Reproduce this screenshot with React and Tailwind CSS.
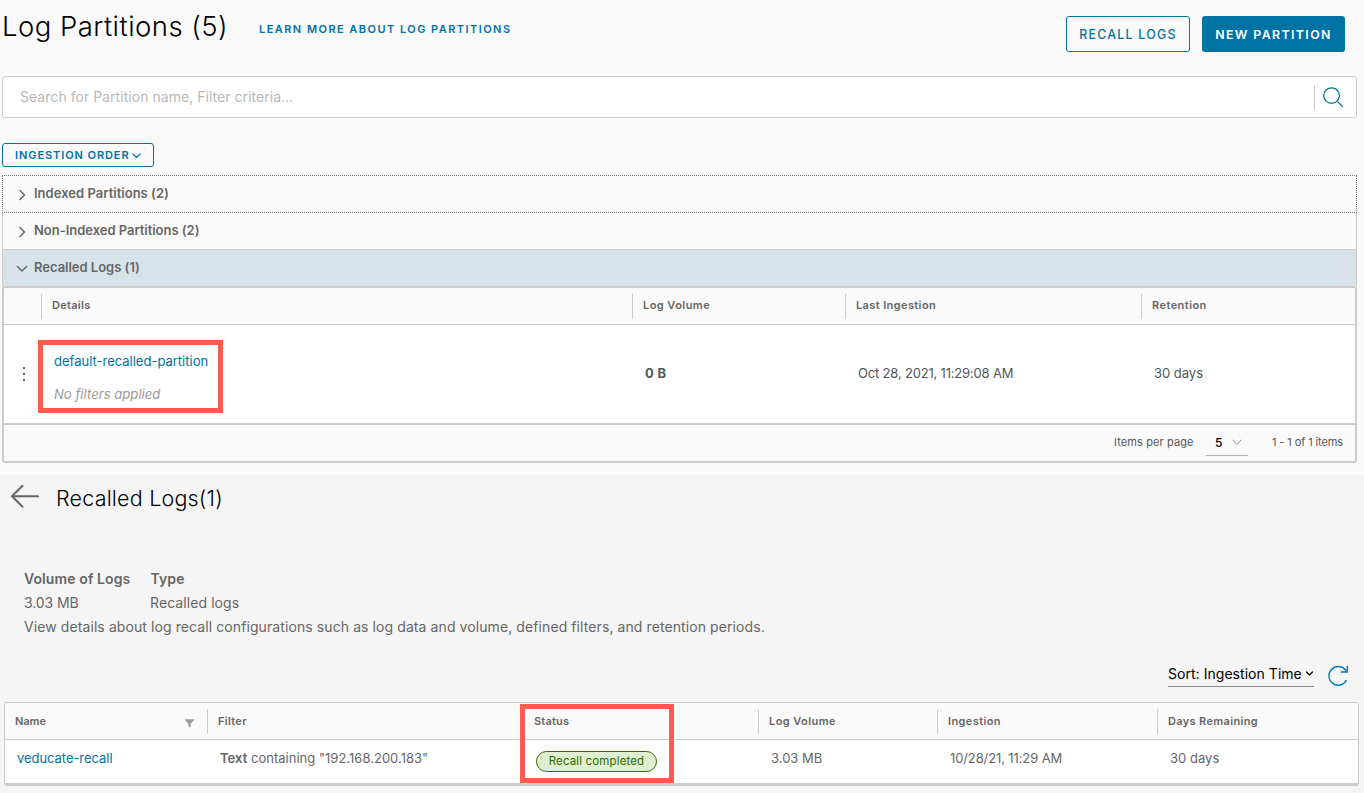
const Chevron = ({ className, d = "M1 1l3.5 3.5L8 1", box = "0 0 9 6" }) => (
  <svg viewBox={box} className={className} fill="none" stroke="currentColor" strokeLinecap="round" strokeLinejoin="round">
    <path d={d} />
  </svg>
);

const HeadCell = ({ className = "", first = false, children }) => (
  <div className={"flex h-full items-center " + className}>
    <div className={"flex h-[25px] w-full items-center border-l " + (first ? "border-transparent" : "border-[#ccc]")}>
      <div className="flex h-[24px] w-full items-center self-start pl-[10px] text-[11px] font-semibold">{children}</div>
    </div>
  </div>
);

function AccordionRow({ label, open, className }) {
  return (
    <div className={"flex items-center text-[13px] font-semibold text-[#666] " + className}>
      <div className="flex w-[15px] justify-center pt-[2px]">
        {open ? (
          <Chevron className="h-[8px] w-[12px] stroke-[1.5]" box="0 0 12 8" d="M1.5 1.5L6 6l4.5-4.5" />
        ) : (
          <Chevron className="h-[12px] w-[8px] stroke-[1.5]" box="0 0 8 12" d="M2 1.5L6.5 6 2 10.5" />
        )}
      </div>
      <span className="pl-[5px] pt-px">{label}</span>
    </div>
  );
}

function PartitionsPanel() {
  return (
    <section className="h-[475px] bg-[#fafafa] pl-[2px] pr-[7px]">
      <header className="flex h-[76px] items-start">
        <h1 className="w-[257px] pt-[10px] text-[27.5px] font-light leading-[32px] tracking-[0.45px] text-black">Log Partitions (5)</h1>
        <a className="pt-[20px] text-[11px] font-semibold leading-[18px] tracking-[1.45px] text-[#0072a3]">LEARN MORE ABOUT LOG PARTITIONS</a>
        <div className="ml-auto mr-[12px] flex gap-3 pt-4">
          <button className="h-9 w-[124px] rounded-[3px] border border-[#0072a3] pt-[2px] text-[12.4px] font-medium tracking-[1.25px] text-[#0072a3]">RECALL LOGS</button>
          <button className="h-9 w-[143px] rounded-[3px] bg-[#0072a3] pt-[2px] text-[12.4px] font-semibold tracking-[1.36px] text-white">NEW PARTITION</button>
        </div>
      </header>

      <div className="flex h-[42px] items-center rounded-[3px] border border-[#ccc] bg-white">
        <span className="grow pb-[2px] pl-[17px] text-[14px] tracking-[0.04px] text-[#b8b8b8]">Search for Partition name, Filter criteria...</span>
        <div className="flex h-[25px] w-[42px] items-center border-l border-[#ccc] pl-[7px]">
          <svg viewBox="0 0 22 22" className="h-[22px] w-[22px] pt-px" fill="none" stroke="#0072a3" strokeWidth="1.3" strokeLinecap="round">
            <circle cx="9.5" cy="9" r="8.2" />
            <path d="M16 15.6l5 5" />
          </svg>
        </div>
      </div>

      <button className="mt-[25px] flex h-6 w-[152px] items-center rounded-[3px] border border-[#0072a3] pl-[12px] text-[11px] font-semibold tracking-[0.92px] text-[#0072a3]">
        INGESTION ORDER
        <Chevron className="ml-[2px] mt-[2px] h-[6px] w-[9px] stroke-[1.2]" />
      </button>

      <div className="mt-2">
        <AccordionRow label="Indexed Partitions (2)" className="h-[38px] border border-dotted border-[#777] pb-px pl-[11px] tracking-[0.02px]" />
        <AccordionRow label="Non-Indexed Partitions (2)" className="h-[36px] border-x border-[#ccc] pb-px pl-[11px] tracking-[-0.03px]" />
        <AccordionRow open label="Recalled Logs (1)" className="h-[37px] border border-b-0 border-[#ccc] bg-[#d8e3e9] pb-px pl-[11px] tracking-[-0.02px]" />
      </div>

      <div className="relative rounded-[3px] border-2 border-[#ccc] text-[13px] text-[#565656]">
        <div className="flex h-[37px] border-b border-[#ccc] text-[#666]">
          <div className="w-[37px]" />
          <HeadCell className="w-[591px] tracking-[0.29px]">Details</HeadCell>
          <HeadCell className="w-[213px] tracking-[0.45px]">Log Volume</HeadCell>
          <HeadCell className="w-[296px] tracking-[0.39px]">Last Ingestion</HeadCell>
          <HeadCell className="grow tracking-[0.45px]">Retention</HeadCell>
        </div>
        <div className="flex h-[98px] items-center bg-white">
          <div className="flex w-[37px] flex-col items-center gap-[4px] pl-[3px]">
            <i className="size-[2px] bg-[#666]" />
            <i className="size-[2px] bg-[#666]" />
            <i className="size-[2px] bg-[#666]" />
          </div>
          <div className="w-[591px] pl-[13px] pt-[6px]">
            <div className="h-[32px] leading-[20px] text-[#0072a3]">
              <span className="block pt-[4px]">default-recalled-partition</span>
            </div>
            <div className="h-[28px] pt-[5px] italic leading-[20px] tracking-[0.06px] text-[#999]">No filters applied</div>
          </div>
          <div className="w-[213px] pl-[13px] font-bold tracking-[0.33px]">0 B</div>
          <div className="w-[296px] pl-[13px] tracking-[-0.18px]">Oct 28, 2021, 11:29:08 AM</div>
          <div className="pl-[13px] tracking-[-0.02px]">30 days</div>
        </div>
        <div className="flex h-[38px] items-start border-t-2 border-[#ccc] text-[11px]">
          <span className="ml-auto w-[92px] pt-[8px] leading-[18px] tracking-[0.1px]">Items per page</span>
          <div className="flex h-[31px] w-[42px] items-center border-b border-[#b3b3b3] pl-[9px] pt-[6px] text-[12px] font-medium text-black">
            <span className="w-[17px]">5</span>
            <Chevron className="mb-[2px] h-[7px] w-[10px] text-[#999]" box="0 0 10 7" d="M1 1l4 4.5L9 1" />
          </div>
          <span className="w-[107px] whitespace-nowrap pl-[24px] pt-[8px] leading-[18px] tracking-[-0.1px]">1 - 1 of 1 items</span>
        </div>
        <div className="absolute left-[34px] top-[52px] h-[73px] w-[185px] border-[5px] border-[#fa5c4d]" />
      </div>
    </section>
  );
}

function RecalledLogsPanel() {
  return (
    <section className="h-[318px] bg-[#f5f5f5] text-[#666]">
      <div className="flex h-[92px] items-start pl-[10px] pt-[9px]">
        <svg viewBox="0 0 30 25" className="h-[25px] w-[30px]" fill="none" stroke="#666" strokeWidth="2" strokeLinecap="round" strokeLinejoin="round">
          <path d="M28 12.3H2M12.5 1.8L2 12.3l10.5 10.5" />
        </svg>
        <h2 className="pl-[16px] text-[21.5px] font-light leading-[29px] tracking-[0.2px] text-black">Recalled Logs(1)</h2>
      </div>

      <div className="flex h-[48px] pl-[24px] text-[14px] leading-6">
        <div className="w-[126px]">
          <div className="font-semibold tracking-[0.1px]">Volume of Logs</div>
          <div className="tracking-[-0.1px]">3.03 MB</div>
        </div>
        <div>
          <div className="pl-[0.5px] font-semibold tracking-[0.1px]">Type</div>
          <div className="tracking-[0.08px]">Recalled logs</div>
        </div>
      </div>
      <p className="h-[48px] pl-[24px] text-[14px] leading-6 tracking-[0.09px]">
        View details about log recall configurations such as log data and volume, defined filters, and retention periods.
      </p>

      <div className="flex h-[39px] items-start justify-end pr-[15px]">
        <div className="flex h-[24px] w-[146px] items-center border-b border-[#8c8c8c] pb-[2px] text-[14px] tracking-[0.04px] text-black">
          Sort: Ingestion Time
          <Chevron className="ml-[3px] h-[6px] w-[9px] stroke-[1.2]" d="M1.5 1l3 3 3-3" />
        </div>
        <svg viewBox="0 0 22 22" className="ml-[13px] mt-[2px] h-[22px] w-[22px]" fill="none" stroke="#0079b8" strokeWidth="1.4">
          <path d="M19.5 15.2A9.3 9.3 0 1 1 19.3 6.2" />
          <path d="M20.2 0.8V7h-6.5" />
        </svg>
      </div>

      <div className="relative ml-[4px] mr-[5px] h-[84px] rounded-[3px] border border-b-[3px] border-[#ccc] bg-white text-[13px]">
        <div className="flex h-[37px] rounded-t-[2px] border-b border-[#ccc] bg-[#fafafa]">
          <HeadCell first className="w-[202px]">
            <span className="-ml-px grow pt-[2px] tracking-[-0.05px]">Name</span>
            <svg viewBox="0 0 9 9" className="mr-[13px] mt-[5px] h-[9px] w-[9px]" fill="#999">
              <path d="M0 0.3h9v1L5.6 4.6V8.6L3.4 7.6V4.6L0 1.3z" />
            </svg>
          </HeadCell>
          <HeadCell className="w-[316px] tracking-[0.3px]"><span className="pt-[2px]">Filter</span></HeadCell>
          <HeadCell className="w-[235px] tracking-[0.2px]"><span className="pt-[2px]">Status</span></HeadCell>
          <HeadCell className="w-[179px] tracking-[0.43px]"><span className="pt-[2px]">Log Volume</span></HeadCell>
          <HeadCell className="w-[220px] tracking-[0.39px]"><span className="pt-[2px]">Ingestion</span></HeadCell>
          <HeadCell className="grow tracking-[0.34px]"><span className="pt-[2px]">Days Remaining</span></HeadCell>
        </div>
        <div className="flex h-[43px] items-start leading-[18px]">
          <div className="w-[202px] pl-[12px] pt-[9px] tracking-[-0.05px] text-[#0072a3]">veducate-recall</div>
          <div className="w-[316px] pl-[13px] pt-[9px] tracking-[0.02px]">
            <b className="font-semibold">Text</b> containing "192.168.200.183"
          </div>
          <div className="w-[235px] pl-[13px] pt-[11px]">
            <span className="flex h-[21px] w-[121px] items-center justify-center rounded-full border border-[#306b00] bg-[#dff0d0] pb-px text-[11.5px] tracking-[0.14px] text-[#306b00]">Recall completed</span>
          </div>
          <div className="w-[179px] pl-[13px] pt-[9px]">3.03 MB</div>
          <div className="w-[220px] pl-[13px] pt-[9px] tracking-[-0.11px]">10/28/21, 11:29 AM</div>
          <div className="pl-[13px] pt-[9px] tracking-[0.03px]">30 days</div>
        </div>
        <div className="absolute left-[515px] top-[1px] h-[79px] w-[154px] border-[5px] border-[#fa5c4d]" />
      </div>
    </section>
  );
}

export default function App() {
  return (
    <main className="h-[793px] w-[1364px] overflow-hidden font-[Inter,sans-serif]">
      <PartitionsPanel />
      <RecalledLogsPanel />
    </main>
  );
}
